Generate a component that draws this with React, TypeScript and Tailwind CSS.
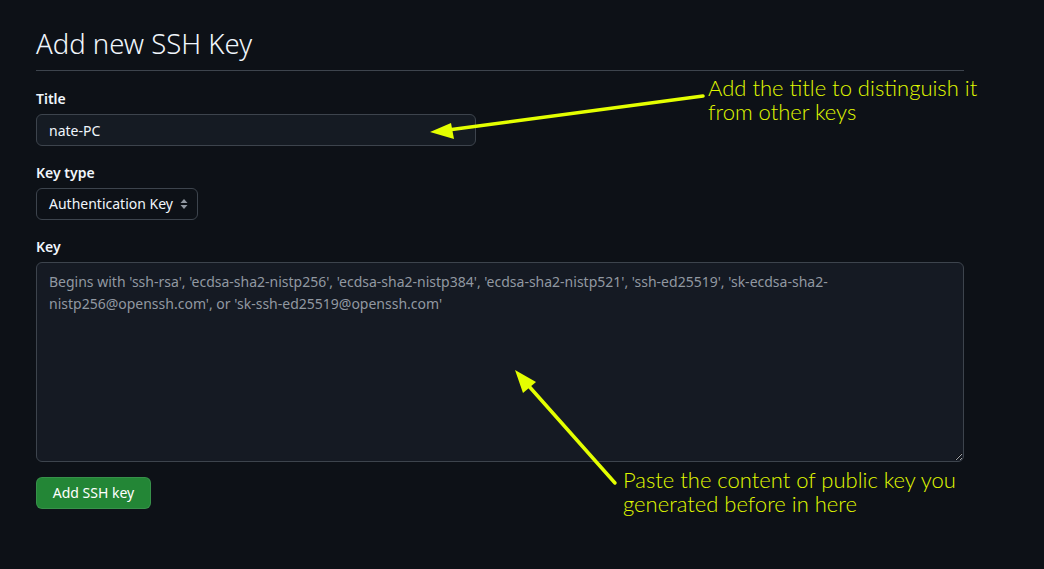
const ui = { fontFamily: '"Noto Sans", "Liberation Sans", sans-serif' }
const note = { fontFamily: 'Lato, "Noto Sans", sans-serif' }

function Label({ children }: { children: React.ReactNode }) {
  return (
    <label className="mb-[5px] block text-sm leading-[21px] font-semibold text-[#f0f6fc]">
      {children}
    </label>
  )
}

function SelectArrows() {
  return (
    <svg width="8" height="12" viewBox="0 0 8 12" className="ml-[7px]">
      <path d="M4 1 L7.5 5 H0.5 Z" fill="#9198a1" />
      <path d="M4 11 L7.5 7 H0.5 Z" fill="#9198a1" />
    </svg>
  )
}

function Annotations() {
  return (
    <>
      <svg
        className="pointer-events-none absolute inset-0"
        width="1044"
        height="569"
        viewBox="0 0 1044 569"
      >
        <line x1="703" y1="96" x2="448" y2="130" stroke="#e4ff00" strokeWidth="3.5" strokeLinecap="round" />
        <polygon points="430,132 451,123 454,139" fill="#e4ff00" />
        <line x1="615" y1="483" x2="527" y2="384" stroke="#e4ff00" strokeWidth="3.5" strokeLinecap="round" />
        <polygon points="515,370 536,382 523,393" fill="#e4ff00" />
      </svg>
      <p
        style={note}
        className="absolute top-[76px] left-[708px] text-[22px] leading-[24px] font-light whitespace-nowrap text-[#e0fa00]"
      >
        Add the title to distinguish it
        <br />
        from other keys
      </p>
      <p
        style={note}
        className="absolute top-[468px] left-[623px] text-[22px] leading-[24px] font-light whitespace-nowrap text-[#e0fa00]"
      >
        Paste the content of public key you
        <br />
        generated before in here
      </p>
    </>
  )
}

export default function App() {
  return (
    <div style={ui} className="relative h-[569px] w-full overflow-hidden bg-[#0d1117]">
      <div className="w-[964px] pt-[26px] pl-9">
        <h2 className="border-b border-[#3d444d] pb-2 text-[27.5px] leading-9 font-light text-[#f0f6fc]">
          Add new SSH Key
        </h2>

        <div className="mt-[17px]">
          <Label>Title</Label>
          <input
            style={ui}
            defaultValue="nate-PC"
            className="block h-8 w-[440px] rounded-md border border-[#3d444d] bg-[#151b23] px-3 text-sm text-[#f0f6fc] outline-none"
          />
        </div>

        <div className="mt-4">
          <Label>Key type</Label>
          <div className="flex h-8 w-[162px] items-center rounded-md border border-[#3d444d] bg-[#0d1117] pl-3 text-sm text-[#f0f6fc]">
            Authentication Key
            <SelectArrows />
          </div>
        </div>

        <div className="mt-4">
          <Label>Key</Label>
          <textarea
            style={ui}
            placeholder="Begins with 'ssh-rsa', 'ecdsa-sha2-nistp256', 'ecdsa-sha2-nistp384', 'ecdsa-sha2-nistp521', 'ssh-ed25519', 'sk-ecdsa-sha2-nistp256@openssh.com', or 'sk-ssh-ed25519@openssh.com'"
            className="block h-[200px] w-full resize-y rounded-md border border-[#3d444d] bg-[#151a23] px-3 py-2 text-sm leading-[22px] text-[#f0f6fc] outline-none [color-scheme:dark] placeholder:text-[#9198a1]"
          />
        </div>

        <button className="mt-[15px] h-8 w-[115px] rounded-md border border-[#f0f6fc1a] bg-[#238636] text-sm font-normal text-white">
          Add SSH key
        </button>
      </div>

      <Annotations />
    </div>
  )
}
